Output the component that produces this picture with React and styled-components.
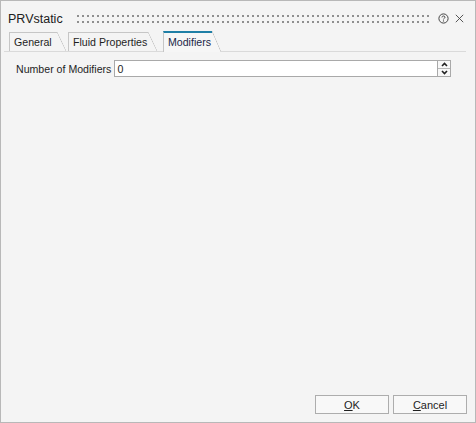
import React from "react";
import styled, { createGlobalStyle } from "styled-components";

const Global = createGlobalStyle`
  html, body {
    margin: 0;
    padding: 0;
    background: #f4f4f4;
  }
  body {
    font-family: "Liberation Sans", Arial, sans-serif;
    font-size: 10.6px;
    color: #1e1e1e;
  }
`;

const Window = styled.div`
  width: 476px;
  height: 423px;
  box-sizing: border-box;
  border: 1px solid #b8b8b8;
  background: #f4f4f4;
  display: flex;
  flex-direction: column;
`;

const TitleBar = styled.div`
  height: 30px;
  box-sizing: border-box;
  padding: 11px 10px 0 7px;
  display: flex;
  align-items: flex-start;
`;

const Title = styled.div`
  font-size: 12.5px;
  line-height: 15px;
  color: #202020;
`;

const Grip = styled.div`
  flex: 1;
  height: 8px;
  margin: 3px 9px 0 14px;
  background-image: conic-gradient(at 2px 2px, transparent 75%, #8f8f8f 0);
  background-size: 5px 6px;
`;

const IconButton = styled.div`
  width: 11px;
  height: 11px;
  margin-top: 1px;
  margin-left: ${(p) => p.$ml || 0}px;
  display: flex;
  align-items: center;
  justify-content: center;
  color: #444444;
`;

const TabStrip = styled.div`
  height: 20px;
  padding-left: 8px;
  display: flex;
  align-items: flex-end;
`;

const Tab = styled.div`
  position: relative;
  z-index: ${(p) => (p.$active ? 1 : 0)};
  box-sizing: border-box;
  width: ${(p) => p.$w}px;
  height: ${(p) => (p.$active ? 21 : 19)}px;
  margin: 0 ${(p) => p.$mr}px ${(p) => (p.$active ? -1 : 0)}px 0;
  padding: 0 0 ${(p) => (p.$active ? 1 : 0)}px 4px;
  border-left: 1px solid #c6c6c6;
  border-top: ${(p) => (p.$active ? "2px solid #1f7fa6" : "1px solid #c6c6c6")};
  background: ${(p) => (p.$active ? "#f6f6f6" : "#f4f4f4")};
  color: ${(p) => (p.$active ? "#1b2748" : "#1e1e1e")};
  display: flex;
  align-items: center;
  white-space: nowrap;

  &::after {
    content: "";
    position: absolute;
    top: ${(p) => (p.$active ? -2 : -1)}px;
    right: -9px;
    width: 9px;
    height: ${(p) => (p.$active ? 21 : 19)}px;
    background: linear-gradient(
      to top right,
      ${(p) => (p.$active ? "#f6f6f6" : "transparent")} calc(50% - 0.6px),
      #c6c6c6 50%,
      transparent calc(50% + 0.6px)
    );
  }
`;

const Panel = styled.div`
  flex: 1;
  margin: 0 9px 0 3px;
  border-top: 1px solid #dadada;
  padding: 8px 15px 0 12px;
`;

const FieldRow = styled.div`
  display: flex;
  align-items: center;
  height: 17px;
`;

const Label = styled.div`
  margin-right: 3px;
  white-space: nowrap;
  color: #1e1e1e;
`;

const Input = styled.div`
  flex: 1;
  height: 17px;
  box-sizing: border-box;
  border: 1px solid #a9a9a9;
  background: #ffffff;
  padding-left: 2px;
  display: flex;
  align-items: center;
`;

const Spinner = styled.div`
  width: 14px;
  height: 17px;
  box-sizing: border-box;
  margin-left: -1px;
  border: 1px solid #a9a9a9;
  background: #f7f7f7;
  display: flex;
  flex-direction: column;
`;

const SpinHalf = styled.div`
  flex: 1;
  display: flex;
  align-items: center;
  justify-content: center;
  border-top: ${(p) => (p.$bottom ? "1px solid #b8b8b8" : "none")};
  color: #202020;
`;

const Footer = styled.div`
  display: flex;
  justify-content: flex-end;
  gap: 4px;
  padding: 0 8px 8px 0;
`;

const Button = styled.div`
  width: 74px;
  height: 19px;
  box-sizing: border-box;
  border: 1px solid #adadad;
  background: #f8f8f8;
  display: flex;
  align-items: center;
  justify-content: center;
  font-size: 11px;
  color: #1e1e1e;

  u {
    text-decoration-thickness: 1px;
    text-underline-offset: 1px;
  }
`;

const HelpIcon = () => (
  <svg width="11" height="11" viewBox="0 0 11 11" fill="none" stroke="currentColor">
    <circle cx="5.5" cy="5.5" r="4.6" strokeWidth="1" />
    <path d="M4 4.4 C4 3.5 4.7 3 5.5 3 C6.3 3 7 3.5 7 4.3 C7 5.2 5.5 5.3 5.5 6.4" strokeWidth="1" />
    <circle cx="5.5" cy="7.9" r="0.6" fill="currentColor" stroke="none" />
  </svg>
);

const CloseIcon = () => (
  <svg width="11" height="11" viewBox="0 0 11 11" stroke="currentColor" strokeWidth="0.9">
    <path d="M1.8 1.8 L9.2 9.2 M9.2 1.8 L1.8 9.2" />
  </svg>
);

const Chevron = ({ down }) => (
  <svg width="7" height="5" viewBox="0 0 7 5" fill="none" stroke="currentColor" strokeWidth="1.6">
    <path d={down ? "M1 1 L3.5 3.6 L6 1" : "M1 4 L3.5 1.4 L6 4"} />
  </svg>
);

export default function App() {
  return (
    <>
      <Global />
      <Window>
        <TitleBar>
          <Title>PRVstatic</Title>
          <Grip />
          <IconButton>
            <HelpIcon />
          </IconButton>
          <IconButton $ml={5}>
            <CloseIcon />
          </IconButton>
        </TitleBar>

        <TabStrip>
          <Tab $w={48} $mr={11}>General</Tab>
          <Tab $w={80} $mr={15}>Fluid Properties</Tab>
          <Tab $w={49} $mr={0} $active>
            Modifiers
          </Tab>
        </TabStrip>

        <Panel>
          <FieldRow>
            <Label>Number of Modifiers</Label>
            <Input>0</Input>
            <Spinner>
              <SpinHalf>
                <Chevron />
              </SpinHalf>
              <SpinHalf $bottom>
                <Chevron down />
              </SpinHalf>
            </Spinner>
          </FieldRow>
        </Panel>

        <Footer>
          <Button>
            <span>
              <u>O</u>K
            </span>
          </Button>
          <Button>
            <span>
              <u>C</u>ancel
            </span>
          </Button>
        </Footer>
      </Window>
    </>
  );
}
